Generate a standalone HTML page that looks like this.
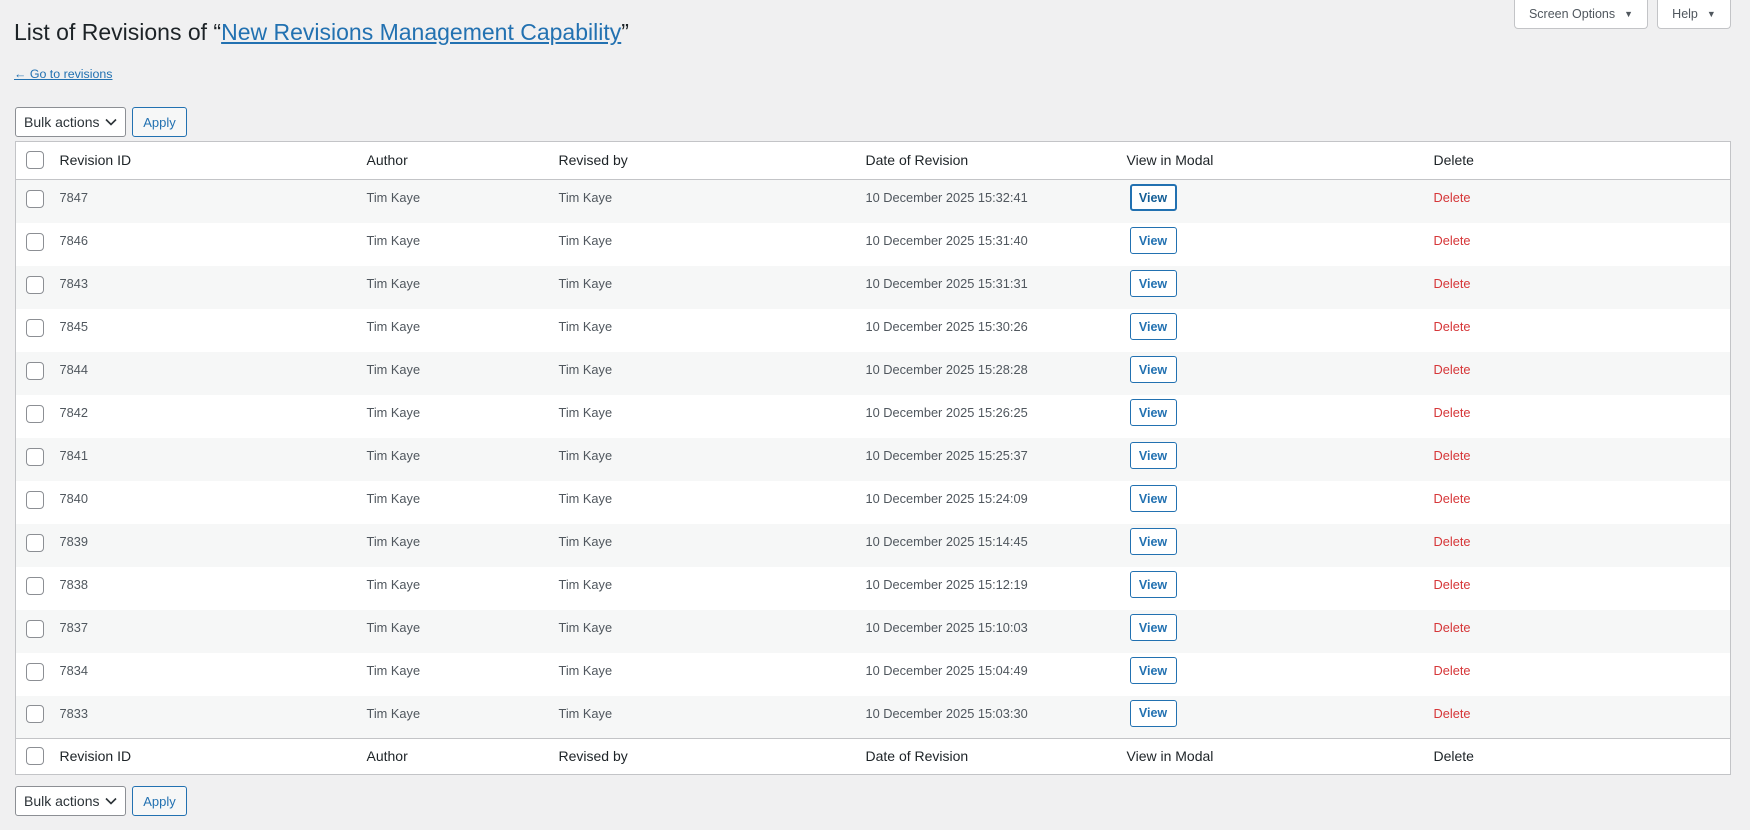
<!DOCTYPE html>
<html><head><meta charset="utf-8"><style>
*{box-sizing:border-box;margin:0;padding:0}
body{width:1750px;height:830px;background:#f0f0f1;font-family:"Liberation Sans",Arial,sans-serif;color:#3c434a;position:relative;overflow:hidden}
.top{position:absolute;top:0;height:29px;background:#fff;border:1px solid #c3c4c7;border-top:none;border-radius:0 0 4px 4px;font-size:12.5px;color:#50575e;display:flex;align-items:center;justify-content:center;white-space:nowrap}
.top span{font-size:9px;margin-left:9px}
h1{position:absolute;left:14px;top:19px;font-size:23px;font-weight:400;color:#1d2327;white-space:nowrap}
h1 a{color:#2271b1}
.back{position:absolute;left:14px;top:67px;font-size:12.4px;color:#2271b1;text-decoration:underline}
.bulk{position:absolute;left:15px;display:flex;gap:6px}
.sel{width:111px;height:30px;background:#fff;border:1px solid #8c8f94;border-radius:3px;font-size:14px;color:#2c3338;padding-left:8px;display:flex;align-items:center;white-space:nowrap}
.sel svg{margin-left:6px}
.apply{width:55px;height:30px;border:1px solid #2271b1;border-radius:3px;color:#2271b1;font-size:13px;display:flex;align-items:center;justify-content:center;background:#f6f7f7}
table{position:absolute;left:15px;top:141px;width:1716px;border:1px solid #c3c4c7;border-collapse:collapse;background:#fff}
td,th{text-align:left;font-weight:400;padding:0;vertical-align:middle;white-space:nowrap}
th{height:38px;font-size:14px;color:#1d2327;padding-bottom:2px}
thead th{border-bottom:1px solid #c3c4c7}
tfoot th{border-top:1px solid #c3c4c7;height:36px}
tbody td{height:43px;font-size:12.8px;color:#50575e;padding-bottom:7px}
tbody tr:nth-child(odd){background:#f6f7f7}
.cb{width:44px;padding-left:10px}
td.cb{padding-bottom:5px}
.cb i{display:block;width:18px;height:18px;border:1px solid #8c8f94;border-radius:4px;background:#fff}
.v{display:inline-flex;width:47px;height:27px;border:1px solid #2271b1;border-radius:3px;color:#2271b1;font-weight:700;font-size:12.5px;align-items:center;justify-content:center;background:#fff;margin-left:3px}
.v.f{border-width:2px;color:#135e96}
.d{color:#d63638}
</style></head><body>
<div class="top" style="left:1514px;width:134px">Screen Options<span>▼</span></div>
<div class="top" style="left:1657px;width:74px">Help<span>▼</span></div>
<h1>List of Revisions of “<a href="#">New Revisions Management Capability</a>”</h1>
<a class="back">← Go to revisions</a>
<div class="bulk" style="top:107px"><div class="sel">Bulk actions<svg width="12" height="8" viewBox="0 0 12 8"><path d="M1 1.5l5 5 5-5" fill="none" stroke="#2c3338" stroke-width="1.6"/></svg></div><div class="apply">Apply</div></div>
<table>
<colgroup><col style="width:44px"><col style="width:307px"><col style="width:192px"><col style="width:307px"><col style="width:261px"><col style="width:307px"><col></colgroup>
<thead><tr><th class="cb"><i></i></th><th>Revision ID</th><th>Author</th><th>Revised by</th><th>Date of Revision</th><th>View in Modal</th><th>Delete</th></tr></thead>
<tbody>
<tr><td class="cb"><i></i></td><td>7847</td><td>Tim Kaye</td><td>Tim Kaye</td><td>10 December 2025 15:32:41</td><td><span class="v f">View</span></td><td class="d">Delete</td></tr>
<tr><td class="cb"><i></i></td><td>7846</td><td>Tim Kaye</td><td>Tim Kaye</td><td>10 December 2025 15:31:40</td><td><span class="v">View</span></td><td class="d">Delete</td></tr>
<tr><td class="cb"><i></i></td><td>7843</td><td>Tim Kaye</td><td>Tim Kaye</td><td>10 December 2025 15:31:31</td><td><span class="v">View</span></td><td class="d">Delete</td></tr>
<tr><td class="cb"><i></i></td><td>7845</td><td>Tim Kaye</td><td>Tim Kaye</td><td>10 December 2025 15:30:26</td><td><span class="v">View</span></td><td class="d">Delete</td></tr>
<tr><td class="cb"><i></i></td><td>7844</td><td>Tim Kaye</td><td>Tim Kaye</td><td>10 December 2025 15:28:28</td><td><span class="v">View</span></td><td class="d">Delete</td></tr>
<tr><td class="cb"><i></i></td><td>7842</td><td>Tim Kaye</td><td>Tim Kaye</td><td>10 December 2025 15:26:25</td><td><span class="v">View</span></td><td class="d">Delete</td></tr>
<tr><td class="cb"><i></i></td><td>7841</td><td>Tim Kaye</td><td>Tim Kaye</td><td>10 December 2025 15:25:37</td><td><span class="v">View</span></td><td class="d">Delete</td></tr>
<tr><td class="cb"><i></i></td><td>7840</td><td>Tim Kaye</td><td>Tim Kaye</td><td>10 December 2025 15:24:09</td><td><span class="v">View</span></td><td class="d">Delete</td></tr>
<tr><td class="cb"><i></i></td><td>7839</td><td>Tim Kaye</td><td>Tim Kaye</td><td>10 December 2025 15:14:45</td><td><span class="v">View</span></td><td class="d">Delete</td></tr>
<tr><td class="cb"><i></i></td><td>7838</td><td>Tim Kaye</td><td>Tim Kaye</td><td>10 December 2025 15:12:19</td><td><span class="v">View</span></td><td class="d">Delete</td></tr>
<tr><td class="cb"><i></i></td><td>7837</td><td>Tim Kaye</td><td>Tim Kaye</td><td>10 December 2025 15:10:03</td><td><span class="v">View</span></td><td class="d">Delete</td></tr>
<tr><td class="cb"><i></i></td><td>7834</td><td>Tim Kaye</td><td>Tim Kaye</td><td>10 December 2025 15:04:49</td><td><span class="v">View</span></td><td class="d">Delete</td></tr>
<tr><td class="cb"><i></i></td><td>7833</td><td>Tim Kaye</td><td>Tim Kaye</td><td>10 December 2025 15:03:30</td><td><span class="v">View</span></td><td class="d">Delete</td></tr>
</tbody>
<tfoot><tr><th class="cb"><i></i></th><th>Revision ID</th><th>Author</th><th>Revised by</th><th>Date of Revision</th><th>View in Modal</th><th>Delete</th></tr></tfoot>
</table>
<div class="bulk" style="top:786px"><div class="sel">Bulk actions<svg width="12" height="8" viewBox="0 0 12 8"><path d="M1 1.5l5 5 5-5" fill="none" stroke="#2c3338" stroke-width="1.6"/></svg></div><div class="apply">Apply</div></div>
</body></html>
